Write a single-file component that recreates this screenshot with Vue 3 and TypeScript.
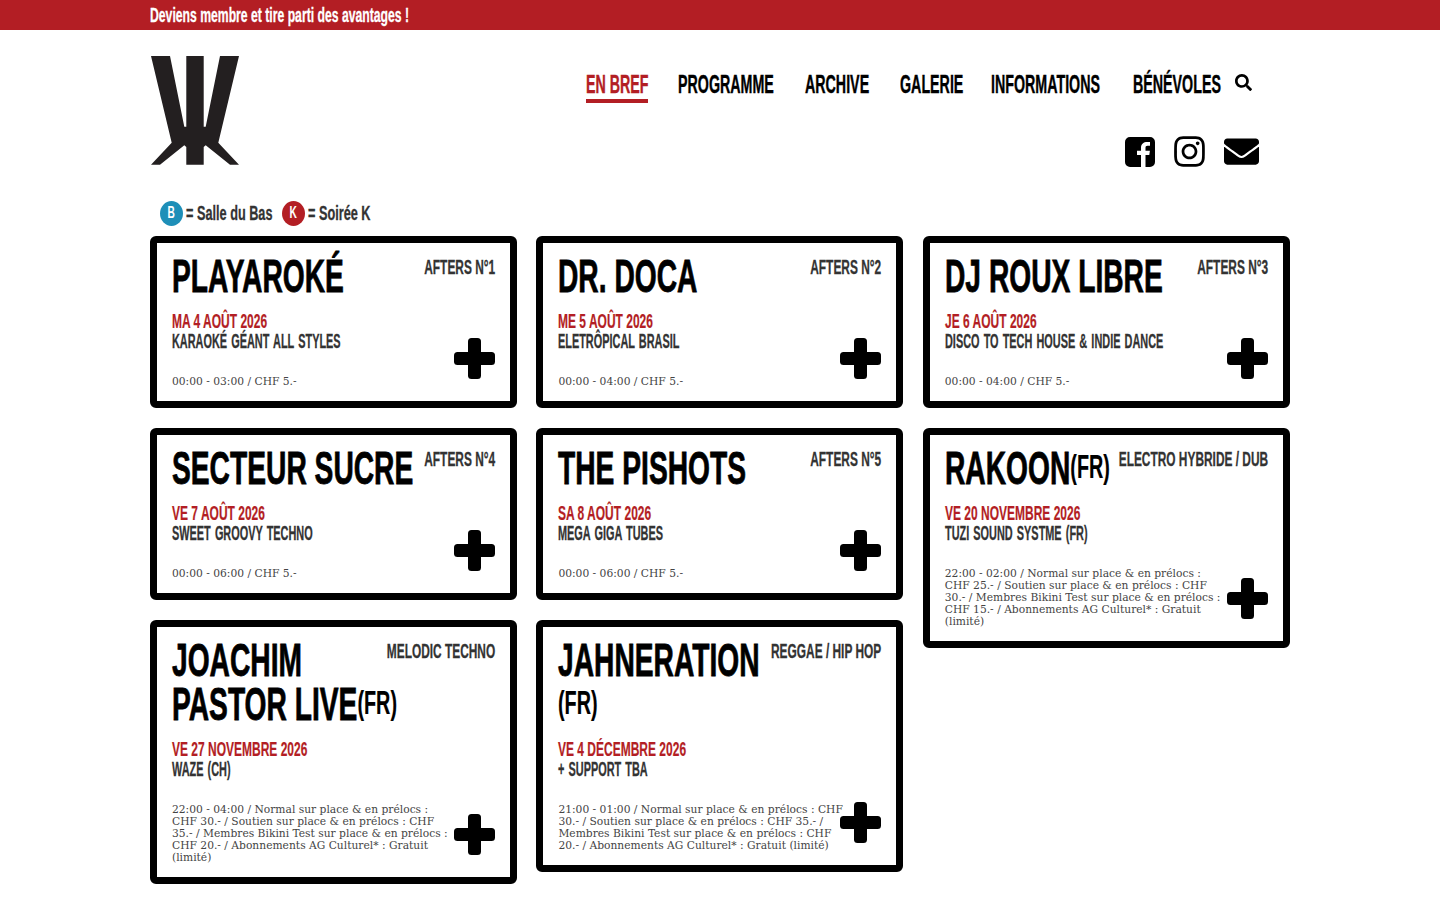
<script setup lang="ts">
interface Show { title: string[]; fr?: boolean; tag: string; date: string; sub: string; info: string }
const nav = [
  { label: 'EN BREF', w: 62, active: true },
  { label: 'PROGRAMME', w: 97 },
  { label: 'ARCHIVE', w: 65 },
  { label: 'GALERIE', w: 61 },
  { label: 'INFORMATIONS', w: 112 },
  { label: 'BÉNÉVOLES', w: 85 },
]
const columns: Show[][] = [
  [
    { title: ['PLAYAROKÉ'], tag: 'AFTERS N°1', date: 'MA 4 AOÛT 2026', sub: 'KARAOKÉ GÉANT ALL STYLES', info: '00:00 - 03:00 / CHF 5.-' },
    { title: ['SECTEUR SUCRE'], tag: 'AFTERS N°4', date: 'VE 7 AOÛT 2026', sub: 'SWEET GROOVY TECHNO', info: '00:00 - 06:00 / CHF 5.-' },
    { title: ['JOACHIM', 'PASTOR LIVE'], fr: true, tag: 'MELODIC TECHNO', date: 'VE 27 NOVEMBRE 2026', sub: 'WAZE (CH)', info: '22:00 - 04:00 / Normal sur place & en prélocs :\nCHF 30.- / Soutien sur place & en prélocs : CHF\n35.- / Membres Bikini Test sur place & en prélocs :\nCHF 20.- / Abonnements AG Culturel* : Gratuit\n(limité)' },
  ],
  [
    { title: ['DR. DOCA'], tag: 'AFTERS N°2', date: 'ME 5 AOÛT 2026', sub: 'ELETRÔPICAL BRASIL', info: '00:00 - 04:00 / CHF 5.-' },
    { title: ['THE PISHOTS'], tag: 'AFTERS N°5', date: 'SA 8 AOÛT 2026', sub: 'MEGA GIGA TUBES', info: '00:00 - 06:00 / CHF 5.-' },
    { title: ['JAHNERATION', ''], fr: true, tag: 'REGGAE / HIP HOP', date: 'VE 4 DÉCEMBRE 2026', sub: '+ SUPPORT TBA', info: '21:00 - 01:00 / Normal sur place & en prélocs : CHF\n30.- / Soutien sur place & en prélocs : CHF 35.- /\nMembres Bikini Test sur place & en prélocs : CHF\n20.- / Abonnements AG Culturel* : Gratuit (limité)' },
  ],
  [
    { title: ['DJ ROUX LIBRE'], tag: 'AFTERS N°3', date: 'JE 6 AOÛT 2026', sub: 'DISCO TO TECH HOUSE & INDIE DANCE', info: '00:00 - 04:00 / CHF 5.-' },
    { title: ['RAKOON'], fr: true, tag: 'ELECTRO HYBRIDE / DUB', date: 'VE 20 NOVEMBRE 2026', sub: 'TUZI SOUND SYSTME (FR)', info: '22:00 - 02:00 / Normal sur place & en prélocs :\nCHF 25.- / Soutien sur place & en prélocs : CHF\n30.- / Membres Bikini Test sur place & en prélocs :\nCHF 15.- / Abonnements AG Culturel* : Gratuit\n(limité)' },
  ],
]
</script>

<template>
  <div class="page">
    <div class="topbar">
      <div class="wrap"><span class="sq topbar-text">Deviens membre et tire parti des avantages !</span></div>
    </div>
    <div class="wrap">
      <header class="header">
        <svg class="logo" viewBox="0 0 88 109" width="88" height="109" aria-label="Logo">
          <path fill="#231f20" d="M0 0H19L33.3 70.7H35.3V0H52.7V70.7H54.7L69 0H88L67.3 86.7L88 108.7H79L54.7 89.3L52.7 91V108.7H35.3V91L33.3 89.3L9 108.7H0L20.7 86.7Z" />
        </svg>
        <div class="head-right">
          <nav class="nav">
            <a v-for="item in nav" :key="item.label" class="nav-item" :class="{ active: item.active }" :style="{ width: item.w + 'px' }">
              <span class="sq">{{ item.label }}</span>
            </a>
            <svg class="search" viewBox="0 0 512 512" width="17" height="17"><path d="M505 442.7L405.3 343c-4.5-4.5-10.6-7-17-7H372c27.6-35.3 44-79.7 44-128C416 93.1 322.9 0 208 0S0 93.1 0 208s93.1 208 208 208c48.3 0 92.7-16.4 128-44v16.3c0 6.4 2.5 12.5 7 17l99.7 99.7c9.4 9.4 24.6 9.4 33.9 0l28.3-28.3c9.4-9.4 9.4-24.6.1-34zM208 336c-70.7 0-128-57.2-128-128 0-70.7 57.2-128 128-128 70.7 0 128 57.2 128 128 0 70.7-57.2 128-128 128z" /></svg>
          </nav>
          <div class="social">
            <svg viewBox="0 0 30 30" width="30" height="30"><path d="M5 0H25a5 5 0 0 1 5 5V25a5 5 0 0 1-5 5H20.5V18H24.3L24.9 13.8H20.5V11c0-1.4.5-2.2 2.1-2.2H25V5.1C24.5 5 23.4 5 22.1 5 18.8 5 16 7 16 10.7V13.8H12V18H16V30H5a5 5 0 0 1-5-5V5a5 5 0 0 1 5-5Z" /></svg>
            <svg viewBox="0 0 448 512" width="31" height="35"><path d="M224.1 141c-63.6 0-114.9 51.3-114.9 114.9s51.3 114.9 114.9 114.9S339 319.5 339 255.9 287.7 141 224.1 141zm0 189.6c-41.1 0-74.7-33.5-74.7-74.7s33.5-74.7 74.7-74.7 74.7 33.5 74.7 74.7-33.6 74.7-74.7 74.7zm146.4-194.3c0 14.9-12 26.8-26.8 26.8-14.9 0-26.8-12-26.8-26.8s12-26.8 26.8-26.8 26.8 12 26.8 26.8zm76.1 27.2c-1.7-35.9-9.9-67.7-36.2-93.9-26.2-26.2-58-34.4-93.9-36.2-37-2.1-147.9-2.1-184.9 0-35.8 1.7-67.6 9.9-93.9 36.1s-34.4 58-36.2 93.9c-2.1 37-2.1 147.9 0 184.9 1.7 35.9 9.9 67.7 36.2 93.9s58 34.4 93.9 36.2c37 2.1 147.9 2.1 184.9 0 35.9-1.7 67.7-9.9 93.9-36.2 26.2-26.2 34.4-58 36.2-93.9 2.1-37 2.1-147.8 0-184.8zM398.8 388c-7.8 19.6-22.9 34.7-42.6 42.6-29.5 11.7-99.5 9-132.1 9s-102.7 2.6-132.1-9c-19.6-7.8-34.7-22.9-42.6-42.6-11.7-29.5-9-99.5-9-132.1s-2.6-102.7 9-132.1c7.8-19.6 22.9-34.7 42.6-42.6 29.5-11.7 99.5-9 132.1-9s102.7-2.6 132.1 9c19.6 7.8 34.7 22.9 42.6 42.6 11.7 29.5 9 99.5 9 132.1s2.7 102.7-9 132.1z" /></svg>
            <svg viewBox="0 0 512 512" width="35" height="35"><path d="M502.3 190.8c3.9-3.1 9.7-.2 9.7 4.7V400c0 26.5-21.5 48-48 48H48c-26.5 0-48-21.5-48-48V195.6c0-5 5.7-7.8 9.7-4.7 22.4 17.4 52.1 39.5 154.1 113.6 21.1 15.4 56.7 47.8 92.2 47.6 35.7.3 72-32.8 92.3-47.6 102-74.1 131.6-96.3 154-113.7zM256 320c23.2.4 56.6-29.2 73.4-41.4 132.7-96.3 142.8-104.7 173.4-128.7 5.8-4.5 9.2-11.5 9.2-18.9v-19c0-26.5-21.5-48-48-48H48C21.5 64 0 85.5 0 112v19c0 7.4 3.4 14.3 9.2 18.9 30.6 23.9 40.7 32.4 173.4 128.7 16.8 12.2 50.2 41.8 73.4 41.4z" /></svg>
          </div>
        </div>
      </header>
      <div class="legend">
        <span class="badge blue"><span class="sq-c">B</span></span>
        <span class="legend-text l1"><span class="sq">= Salle du Bas</span></span>
        <span class="badge red"><span class="sq-c">K</span></span>
        <span class="legend-text l2"><span class="sq">= Soirée K</span></span>
      </div>
      <main class="grid">
        <div v-for="(col, c) in columns" :key="c" class="col">
          <article v-for="s in col" :key="s.date" class="card">
            <div class="card-head">
              <h2 class="title">
                <span class="sq">
                  <template v-for="(line, i) in s.title" :key="i">{{ line }}<span v-if="s.fr && i === s.title.length - 1" class="fr">(FR)</span><br v-if="i < s.title.length - 1" /></template>
                </span>
              </h2>
              <span class="tag"><span class="sq-r">{{ s.tag }}</span></span>
            </div>
            <div class="date"><span class="sq">{{ s.date }}</span></div>
            <div class="sub"><span class="sq">{{ s.sub }}</span></div>
            <p class="info">{{ s.info }}</p>
            <svg class="plus" viewBox="0 0 41 41" width="41" height="41"><rect x="14" y="0" width="13" height="41" rx="3.5" /><rect x="0" y="14" width="41" height="13" rx="3.5" /></svg>
          </article>
        </div>
      </main>
    </div>
  </div>
</template>

<style scoped>
.page { font-family: "Liberation Sans Narrow", "Liberation Sans", sans-serif; font-weight: 700; color: #000; height: 900px; overflow: hidden; background: #fff; }
.wrap { width: 1140px; margin: 0 auto; }
.sq, .sq-c, .sq-r { display: inline-block; white-space: nowrap; transform: scaleX(0.6); transform-origin: left center; }
.sq-c { transform-origin: center; }
.sq-r { transform-origin: right center; }
.topbar { height: 30px; background: #b31e24; color: #fff; font-size: 20px; line-height: 30px; }
.topbar-text { transform: scaleX(0.61); -webkit-text-stroke: 0.3px #fff; }
.header { display: flex; justify-content: space-between; height: 170px; }
.logo { margin: 26px 0 0 1px; flex: none; }
.head-right { display: flex; flex-direction: column; align-items: flex-end; padding-right: 31px; }
.nav { display: flex; align-items: flex-start; gap: 30px; margin-top: 40px; font-size: 25px; line-height: 29px; margin-right: 7px; }
.nav-item { display: block; height: 29px; white-space: nowrap; }
.nav-item .sq { transform: scaleX(0.57); -webkit-text-stroke: 0.4px currentColor; }
.nav-item.active { color: #b31e24; border-bottom: 4px solid #b31e24; }
.search { margin: 4px 0 0 -13px; flex: none; }
.social { display: flex; align-items: center; gap: 19px; margin-top: 31px; height: 35px; }
.legend { display: flex; align-items: center; height: 26px; margin: 0 0 10px 10px; color: #333; font-size: 20px; }
.badge { width: 23px; height: 25px; border-radius: 50%; color: #fff; font-size: 17px; display: flex; justify-content: center; align-items: center; }
.blue { background: #1e8fb8; }
.red { background: #b31e24; }
.legend-text { display: block; margin-left: 3px; }
.legend-text .sq { transform: scaleX(0.635); -webkit-text-stroke: 0.3px #333; }
.l1 { width: 96px; }
.l2 { width: 63px; }
.grid { display: flex; gap: 19.4px; align-items: flex-start; }
.col { width: 367px; display: flex; flex-direction: column; gap: 20px; }
.card { position: relative; box-sizing: border-box; border: 7px solid #000; border-radius: 6px; padding: 11px 15px 14px; }
.card-head { display: flex; }
.title { flex: 1; width: 0; min-width: 0; margin: 0; font-size: 47px; line-height: 44px; font-weight: 700; }
.title .sq { transform: scaleX(0.6); -webkit-text-stroke: 0.8px #000; }
.fr { font-size: 33px; line-height: 1; position: relative; top: -6px; -webkit-text-stroke: 0.2px #000; }
.tag { flex: none; font-size: 20px; line-height: 22px; padding-top: 2px; height: 22px; color: #333; }
.tag .sq-r { transform: scaleX(0.595); -webkit-text-stroke: 0.3px #333; }
.date { color: #b31e24; font-size: 20px; line-height: 20px; margin-top: 13px; }
.date .sq { transform: scaleX(0.6); -webkit-text-stroke: 0.2px #b31e24; }
.sub { color: #333; font-size: 20px; line-height: 20px; word-spacing: 2px; }
.sub .sq { transform: scaleX(0.545); -webkit-text-stroke: 0.3px #333; }
.info { margin: 24px 0 0; font-family: "DejaVu Serif Condensed", "DejaVu Serif", serif; font-weight: 400; font-size: 11.9px; line-height: 12px; color: #444; white-space: pre-line; }
.plus { position: absolute; right: 15px; bottom: 22px; }
</style>
